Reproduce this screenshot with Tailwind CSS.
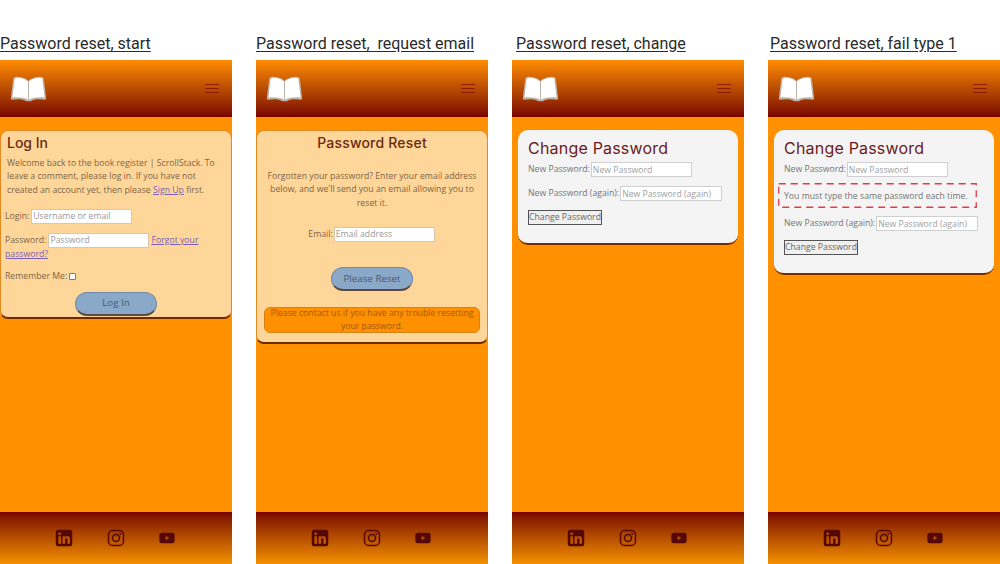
<!DOCTYPE html>
<html lang="en">
  <head>
    <meta charset="UTF-8" />
    <title>Password reset flow</title>
    <script src="https://cdn.jsdelivr.net/npm/@tailwindcss/browser@4"></script>
  </head>
  <body class="bg-white font-['Open_Sans',sans-serif]">
    <!-- Shared icons -->
    <svg class="hidden">
      <symbol id="book" viewBox="0 0 38 26">
        <path d="M19 4.500C15 .8 8.500 -.2 4.500 1C3.500 1.300 3.300 2 3.200 3L.8 22.500C.7 23.500 1.200 24 2 24C8 23 13.500 23.200 16.500 25.500H21.500C24.500 23.200 30 23 36 24C36.800 24 37.300 23.500 37.200 22.500L34.800 3C34.700 2 34.500 1.300 33.500 1C29.500 -.2 23 .8 19 4.500Z" fill="#bdb2a8" />
        <path d="M18.500 5.200C15 2 9.500 .8 5.800 1.700C5 1.900 4.800 2.400 4.700 3.200L2.500 21.800C8 21.200 14.500 21.500 18.500 24Z" fill="#fff" />
        <path d="M19.500 5.200C23 2 28.500 .8 32.200 1.700C33 1.900 33.200 2.400 33.300 3.200L35.500 21.800C30 21.200 23.500 21.500 19.500 24Z" fill="#fff" />
      </symbol>
      <symbol id="linkedin" viewBox="0 0 24 24">
        <path fill-rule="evenodd" d="M4 1H20A3 3 0 0 1 23 4V20A3 3 0 0 1 20 23H4A3 3 0 0 1 1 20V4A3 3 0 0 1 4 1ZM4.500 9.500V19.500H8V9.500ZM6.250 4.300A2 2 0 1 0 6.250 8.300 2 2 0 1 0 6.250 4.300ZM10 9.500V19.500H13.500V14.200C13.500 12.800 14.200 12.200 15.200 12.200 16.200 12.200 16.600 12.900 16.600 14.200V19.500H20V13.600C20 10.700 18.500 9.300 16.300 9.300 15 9.300 14 9.900 13.400 10.800V9.500Z" />
      </symbol>
      <symbol id="instagram" viewBox="0 0 24 24">
        <rect x="2" y="2" width="20" height="20" rx="5.500" fill="none" stroke="currentColor" stroke-width="2" />
        <circle cx="12" cy="12" r="4.700" fill="none" stroke="currentColor" stroke-width="2" />
        <circle cx="17.700" cy="6.300" r="1.300" />
      </symbol>
      <symbol id="youtube" viewBox="0 0 24 18">
        <path fill-rule="evenodd" d="M4 1H20A3.500 3.500 0 0 1 23.500 4.500V13.500A3.500 3.500 0 0 1 20 17H4A3.500 3.500 0 0 1 .5 13.500V4.500A3.500 3.500 0 0 1 4 1ZM10 5.800V12.200L15.500 9Z" />
      </symbol>
    </svg>

    <div class="flex gap-6 w-[1000px] h-[564px] overflow-hidden">
      <!-- Start -->
      <section class="w-[232px] flex flex-col">
        <h2 class="h-[60px] pt-[34px] text-[16px] leading-5 text-[#2a2a2a] underline underline-offset-2 font-['Roboto',sans-serif] whitespace-nowrap">Password reset, start</h2>
        <div class="flex-1 flex flex-col bg-[#ff9000]">
          <header class="h-[57px] shrink-0 flex items-center justify-between pl-[10px] pr-[13px] bg-gradient-to-b from-[#ff8c00] to-[#780000]">
            <svg class="w-[37px] h-[26px]"><use href="#book" /></svg>
            <div class="w-[14px] flex flex-col gap-[2.500px]"><span class="h-[1.500px] bg-[#8c1c00]"></span><span class="h-[1.500px] bg-[#8c1c00]"></span><span class="h-[1.500px] bg-[#8c1c00]"></span></div>
          </header>
          <main class="flex-1 pt-[13px]">
            <div class="h-[189px] rounded-lg bg-[#ffd699] border border-[#e08a20] border-b-2 border-b-[#6e2a00] text-[8.700px] leading-[13.330px] text-[#7c6444]">
              <h1 class="pl-[6px] pt-[2px] text-[14px] leading-[20px] font-medium text-[#6a2a10] font-['Inter',sans-serif]">Log In</h1>
              <p class="px-[6px] mt-[4px]">Welcome back to the book register | ScrollStack. To leave a comment, please log in. If you have not created an account yet, then please <a class="underline text-[#7a5fb4]">Sign Up</a> first.</p>
              <div class="flex items-center gap-[2px] pl-[4px] mt-[12px]">Login:<input class="w-[101px] h-[15px] px-px bg-white border border-[#d8c8a8] text-[8.700px] placeholder:text-[#9a9a9a]" placeholder="Username or email" /></div>
              <div class="mt-[9px] px-[4px]">
                <div class="flex items-center gap-[2px]">Password:<input class="w-[101px] h-[15px] px-px bg-white border border-[#d8c8a8] text-[8.700px] placeholder:text-[#9a9a9a]" placeholder="Password" /><a class="underline text-[#7a5fb4] whitespace-nowrap">Forgot your</a></div>
                <a class="underline text-[#7a5fb4]">password?</a>
              </div>
              <div class="flex items-center gap-[2px] pl-[4px] mt-[9px]">Remember Me:<span class="w-[7px] h-[7px] rounded-[1px] bg-white border border-[#8a7a60]"></span></div>
              <div class="flex justify-center mt-[8px]"><button class="w-[82px] h-[24px] rounded-full bg-[#8aa9c8] border border-[#6e8aa8] border-b-2 border-b-[#5a4a40] text-[9.800px] text-[#4c5a6a]">Log In</button></div>
            </div>
          </main>
          <footer class="h-[52px] shrink-0 flex items-center gap-[34px] pl-[55px] pb-px text-[#560808] bg-gradient-to-b from-[#780000] to-[#f59000]">
            <svg class="w-[18px] h-[18px] fill-current"><use href="#linkedin" /></svg>
            <svg class="w-[18px] h-[18px] fill-current"><use href="#instagram" /></svg>
            <svg class="w-[16px] h-[12px] fill-current"><use href="#youtube" /></svg>
          </footer>
        </div>
      </section>

      <!-- Request email -->
      <section class="w-[232px] flex flex-col">
        <h2 class="h-[60px] pt-[34px] text-[16px] leading-5 text-[#2a2a2a] underline underline-offset-2 font-['Roboto',sans-serif] whitespace-pre">Password reset,  request email</h2>
        <div class="flex-1 flex flex-col bg-[#ff9000]">
          <header class="h-[57px] shrink-0 flex items-center justify-between pl-[10px] pr-[13px] bg-gradient-to-b from-[#ff8c00] to-[#780000]">
            <svg class="w-[37px] h-[26px]"><use href="#book" /></svg>
            <div class="w-[14px] flex flex-col gap-[2.500px]"><span class="h-[1.500px] bg-[#8c1c00]"></span><span class="h-[1.500px] bg-[#8c1c00]"></span><span class="h-[1.500px] bg-[#8c1c00]"></span></div>
          </header>
          <main class="flex-1 pt-[13px]">
            <div class="h-[214px] rounded-lg bg-[#ffd699] border border-[#e08a20] border-b-2 border-b-[#6e2a00] text-[8.700px] leading-[13.330px] text-[#7c6444] text-center">
              <h1 class="pt-[2px] text-[14px] leading-[20px] font-medium tracking-[0.2px] text-[#6a2a10] font-['Inter',sans-serif]">Password Reset</h1>
              <p class="px-[8px] mt-[17px]">Forgotten your password? Enter your email address below, and we'll send you an email allowing you to reset it.</p>
              <div class="flex items-center justify-center gap-px mt-[17px] pr-px">Email:<input class="w-[101px] h-[15px] px-px bg-white border border-[#d8c8a8] text-[8.700px] placeholder:text-[#9a9a9a]" placeholder="Email address" /></div>
              <div class="flex justify-center mt-[25px]"><button class="w-[82px] h-[24px] rounded-full bg-[#8aa9c8] border border-[#6e8aa8] border-b-2 border-b-[#5a4a40] text-[9.800px] text-[#4c5a6a]">Please Reset</button></div>
              <p class="mx-[7px] mt-[16px] h-[26px] rounded-md bg-[#ff9000] border border-[#d88210] text-[#9c5a10]"><span class="block -mt-[1px]">Please contact us if you have any trouble resetting your password.</span></p>
            </div>
          </main>
          <footer class="h-[52px] shrink-0 flex items-center gap-[34px] pl-[55px] pb-px text-[#560808] bg-gradient-to-b from-[#780000] to-[#f59000]">
            <svg class="w-[18px] h-[18px] fill-current"><use href="#linkedin" /></svg>
            <svg class="w-[18px] h-[18px] fill-current"><use href="#instagram" /></svg>
            <svg class="w-[16px] h-[12px] fill-current"><use href="#youtube" /></svg>
          </footer>
        </div>
      </section>

      <!-- Change -->
      <section class="w-[232px] flex flex-col">
        <h2 class="h-[60px] pt-[34px] pl-[4px] text-[16px] leading-5 text-[#2a2a2a] underline underline-offset-2 font-['Roboto',sans-serif] whitespace-nowrap">Password reset, change</h2>
        <div class="flex-1 flex flex-col bg-[#ff9000]">
          <header class="h-[57px] shrink-0 flex items-center justify-between pl-[10px] pr-[13px] bg-gradient-to-b from-[#ff8c00] to-[#780000]">
            <svg class="w-[37px] h-[26px]"><use href="#book" /></svg>
            <div class="w-[14px] flex flex-col gap-[2.500px]"><span class="h-[1.500px] bg-[#8c1c00]"></span><span class="h-[1.500px] bg-[#8c1c00]"></span><span class="h-[1.500px] bg-[#8c1c00]"></span></div>
          </header>
          <main class="flex-1 pt-[13px] px-[6px]">
            <div class="h-[115px] rounded-[10px] bg-[#f4f4f4] border-b-2 border-b-[#7a2a00] px-[10px] pt-[8px] text-[8.700px] leading-[13px] text-[#757575]">
              <h1 class="text-[16px] leading-[20px] font-normal tracking-[0.2px] text-[#6a1a20] font-['Inter',sans-serif] whitespace-nowrap">Change Password</h1>
              <div class="flex items-center gap-px mt-[4px]">New Password:<input class="w-[101px] h-[15px] px-px bg-white border border-[#cfcfcf] text-[8.700px] placeholder:text-[#a0a0a0]" placeholder="New Password" /></div>
              <div class="flex items-center gap-px mt-[9px]">New Password (again):<input class="w-[102px] h-[15px] px-px bg-white border border-[#cfcfcf] text-[8.700px] placeholder:text-[#a0a0a0]" placeholder="New Password (again)" /></div>
              <button class="block mt-[9px] w-[74px] h-[15px] bg-[#f0f0f0] border border-[#555] text-[8.700px] leading-[13px] text-[#666] whitespace-nowrap">Change Password</button>
            </div>
          </main>
          <footer class="h-[52px] shrink-0 flex items-center gap-[34px] pl-[55px] pb-px text-[#560808] bg-gradient-to-b from-[#780000] to-[#f59000]">
            <svg class="w-[18px] h-[18px] fill-current"><use href="#linkedin" /></svg>
            <svg class="w-[18px] h-[18px] fill-current"><use href="#instagram" /></svg>
            <svg class="w-[16px] h-[12px] fill-current"><use href="#youtube" /></svg>
          </footer>
        </div>
      </section>

      <!-- Fail type 1 -->
      <section class="w-[232px] flex flex-col">
        <h2 class="h-[60px] pt-[34px] pl-[2px] text-[16px] leading-5 text-[#2a2a2a] underline underline-offset-2 font-['Roboto',sans-serif] whitespace-nowrap">Password reset, fail type 1</h2>
        <div class="flex-1 flex flex-col bg-[#ff9000]">
          <header class="h-[57px] shrink-0 flex items-center justify-between pl-[10px] pr-[13px] bg-gradient-to-b from-[#ff8c00] to-[#780000]">
            <svg class="w-[37px] h-[26px]"><use href="#book" /></svg>
            <div class="w-[14px] flex flex-col gap-[2.500px]"><span class="h-[1.500px] bg-[#8c1c00]"></span><span class="h-[1.500px] bg-[#8c1c00]"></span><span class="h-[1.500px] bg-[#8c1c00]"></span></div>
          </header>
          <main class="flex-1 pt-[13px] px-[6px]">
            <div class="h-[145px] rounded-[10px] bg-[#f4f4f4] border-b-2 border-b-[#7a2a00] px-[10px] pt-[8px] text-[8.700px] leading-[13px] text-[#757575]">
              <h1 class="text-[16px] leading-[20px] font-normal tracking-[0.2px] text-[#6a1a20] font-['Inter',sans-serif] whitespace-nowrap">Change Password</h1>
              <div class="flex items-center gap-px mt-[4px]">New Password:<input class="w-[101px] h-[15px] px-px bg-white border border-[#cfcfcf] text-[8.700px] placeholder:text-[#a0a0a0]" placeholder="New Password" /></div>
              <div class="relative -ml-[6px] mt-[6px] w-[199px] h-[25px] pl-[6px] pt-[7px] whitespace-nowrap">
                You must type the same password each time.
                <svg class="absolute inset-0 w-[199px] h-[25px]" fill="none"><rect x=".75" y=".75" width="197.500" height="23.500" stroke="#e23a48" stroke-width="1.300" stroke-dasharray="7 5" /></svg>
              </div>
              <div class="flex items-center gap-px mt-[8px]">New Password (again):<input class="w-[102px] h-[15px] px-px bg-white border border-[#cfcfcf] text-[8.700px] placeholder:text-[#a0a0a0]" placeholder="New Password (again)" /></div>
              <button class="block mt-[9px] w-[74px] h-[15px] bg-[#f0f0f0] border border-[#555] text-[8.700px] leading-[13px] text-[#666] whitespace-nowrap">Change Password</button>
            </div>
          </main>
          <footer class="h-[52px] shrink-0 flex items-center gap-[34px] pl-[55px] pb-px text-[#560808] bg-gradient-to-b from-[#780000] to-[#f59000]">
            <svg class="w-[18px] h-[18px] fill-current"><use href="#linkedin" /></svg>
            <svg class="w-[18px] h-[18px] fill-current"><use href="#instagram" /></svg>
            <svg class="w-[16px] h-[12px] fill-current"><use href="#youtube" /></svg>
          </footer>
        </div>
      </section>
    </div>
  </body>
</html>
